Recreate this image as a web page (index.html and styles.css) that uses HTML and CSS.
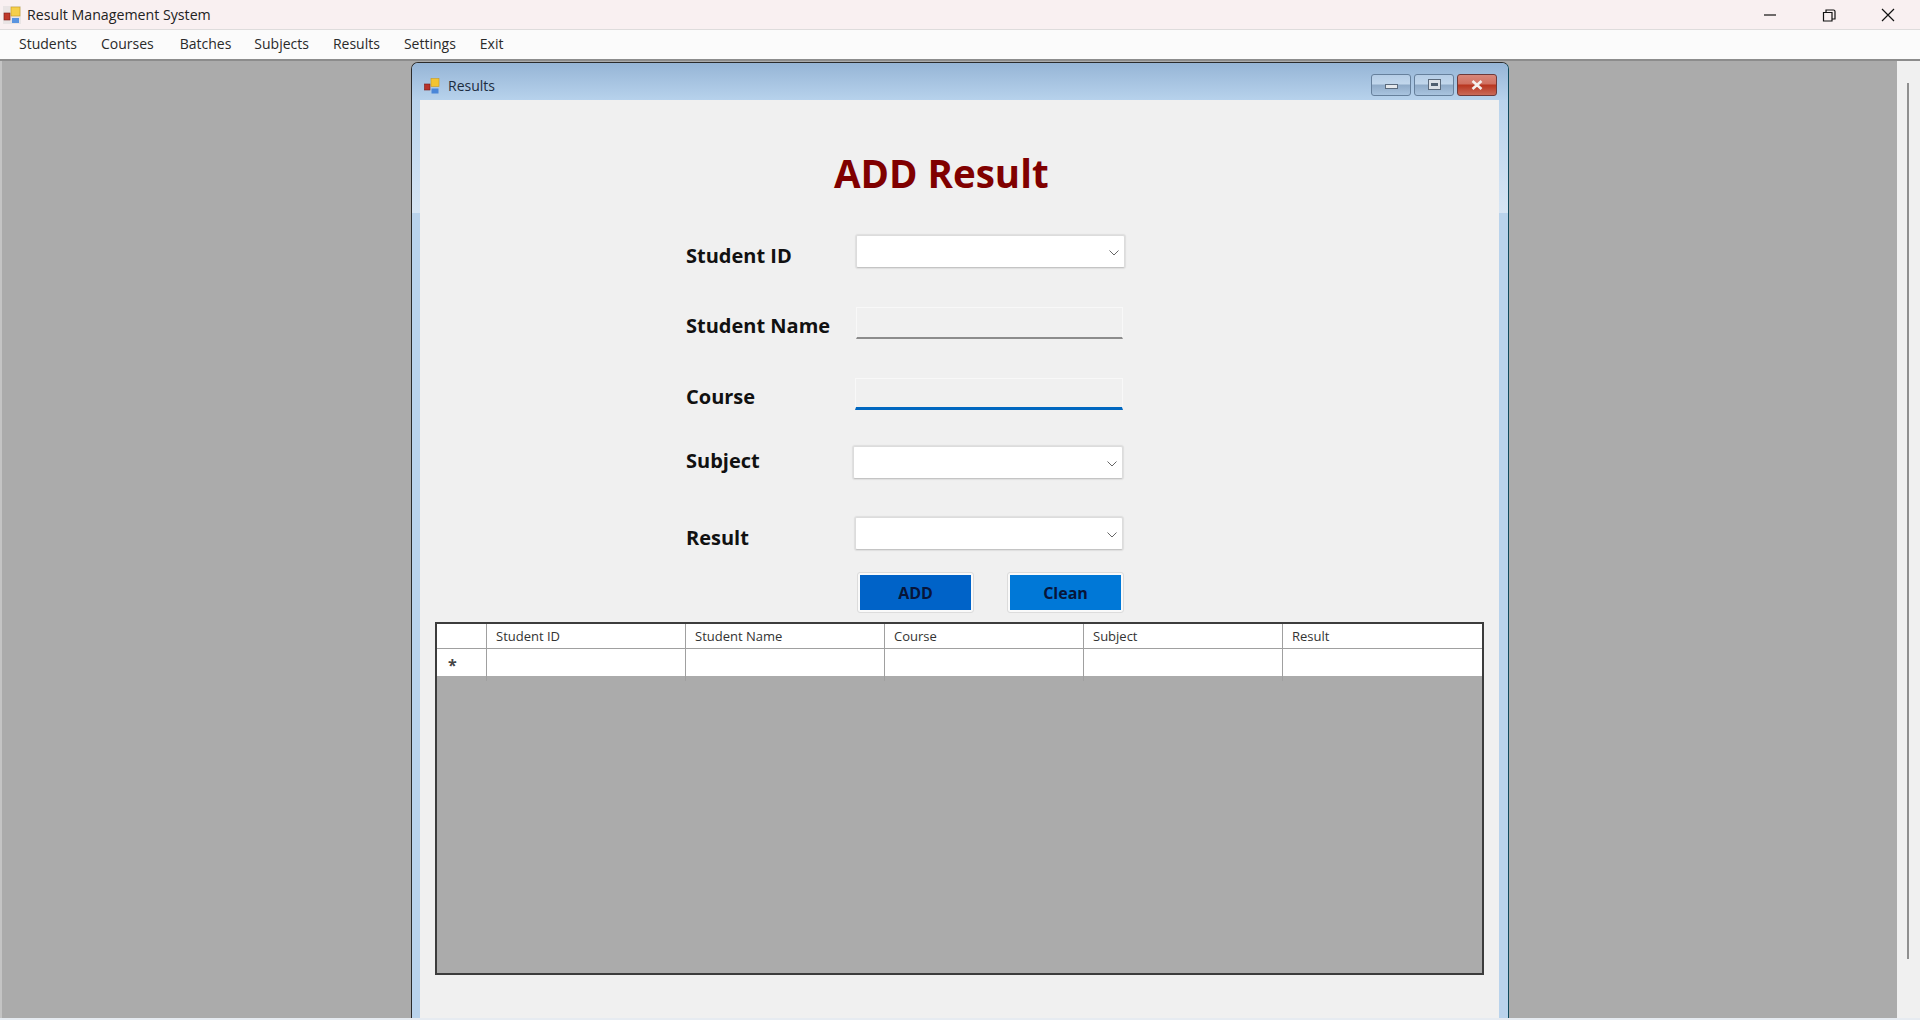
FILE: index.html
```html
<!DOCTYPE html>
<html lang="en">
<head>
  <meta charset="UTF-8">
  <title>Result Management System</title>
  <link rel="stylesheet" href="styles.css">
</head>
<body>
  <header class="titlebar">
    <svg class="app-icon" viewBox="0 0 18 18">
      <rect width="18" height="18" fill="#e9e4e4"/>
      <rect x="1" y="7" width="6" height="7" fill="#c0392b" stroke="#7a1a14" stroke-width="0.6"/>
      <rect x="8" y="1" width="9" height="9" fill="#f6cf4a" stroke="#c89a20" stroke-width="0.6"/>
      <rect x="9" y="12" width="7" height="5" fill="#5a94e0"/>
    </svg>
    <span class="titlebar-text">Result Management System</span>
    <div class="winbtns">
      <svg viewBox="0 0 14 14"><path d="M1 7h12" stroke="#111" stroke-width="1.200" fill="none"/></svg>
      <svg viewBox="0 0 14 14"><path d="M1.500 4.500h8.500v8.500h-8.500z M4 4.500v-2.500h7.500a1.500 1.500 0 0 1 1.500 1.500v7.500h-3" stroke="#111" stroke-width="1.200" fill="none"/></svg>
      <svg viewBox="0 0 14 14"><path d="M1 1l12 12M13 1L1 13" stroke="#111" stroke-width="1.200" fill="none"/></svg>
    </div>
  </header>

  <nav class="menubar">
    <span class="menu-item">Students</span>
    <span class="menu-item">Courses</span>
    <span class="menu-item menu-batches">Batches</span>
    <span class="menu-item">Subjects</span>
    <span class="menu-item">Results</span>
    <span class="menu-item">Settings</span>
    <span class="menu-item">Exit</span>
  </nav>

  <main class="workspace">
    <section class="child-window">
      <div class="child-title">
        <svg class="child-icon" viewBox="0 0 16 16">
          <rect x="0.500" y="6" width="5.500" height="6" fill="#b8322a" stroke="#7a1a14" stroke-width="0.6"/>
          <rect x="7" y="0.500" width="8" height="8" fill="#f4c430" stroke="#c89a20" stroke-width="0.6"/>
          <rect x="7.500" y="10.500" width="7" height="5" fill="#4a86d8"/>
        </svg>
        <span class="child-title-text">Results</span>
        <div class="child-btns">
          <div class="cbtn"><span class="glyph-min"></span></div>
          <div class="cbtn"><span class="glyph-max"></span></div>
          <div class="cbtn cbtn-close">
            <svg viewBox="0 0 14 10"><path d="M2.500 1l9 8M11.500 1l-9 8" stroke="#f4f0ee" stroke-width="2.600" fill="none"/></svg>
          </div>
        </div>
      </div>

      <div class="client">
        <h1 class="form-heading">ADD Result</h1>

        <div class="form-row row-id">
          <label class="form-label label-low">Student ID</label>
          <div class="combo">
            <svg class="chevron" viewBox="0 0 10 6"><path d="M0.500 0.500L5 5l4.500-4.500" stroke="#666" fill="none"/></svg>
          </div>
        </div>

        <div class="form-row row-name">
          <label class="form-label label-mid">Student Name</label>
          <input class="textbox" type="text">
        </div>

        <div class="form-row row-course">
          <label class="form-label label-mid">Course</label>
          <input class="textbox textbox-focus" type="text">
        </div>

        <div class="form-row row-subject">
          <label class="form-label label-high">Subject</label>
          <div class="combo combo-subject">
            <svg class="chevron" viewBox="0 0 10 6"><path d="M0.500 0.500L5 5l4.500-4.500" stroke="#666" fill="none"/></svg>
          </div>
        </div>

        <div class="form-row row-result">
          <label class="form-label label-low">Result</label>
          <div class="combo combo-result">
            <svg class="chevron" viewBox="0 0 10 6"><path d="M0.500 0.500L5 5l4.500-4.500" stroke="#666" fill="none"/></svg>
          </div>
        </div>

        <div class="button-row">
          <button class="btn btn-add">ADD</button>
          <button class="btn btn-clean">Clean</button>
        </div>

        <div class="grid-view">
          <div class="grid-head">
            <div class="grid-corner"></div>
            <div class="grid-col">Student ID</div>
            <div class="grid-col">Student Name</div>
            <div class="grid-col">Course</div>
            <div class="grid-col">Subject</div>
            <div class="grid-col">Result</div>
          </div>
          <div class="grid-new-row">
            <div class="grid-rowhead">*</div>
            <div class="grid-cell"></div>
            <div class="grid-cell"></div>
            <div class="grid-cell"></div>
            <div class="grid-cell"></div>
            <div class="grid-cell"></div>
          </div>
        </div>
      </div>
    </section>

    <aside class="scrollbar">
      <div class="scroll-thumb"></div>
    </aside>
  </main>
  <div class="bottom-strip"></div>
</body>
</html>
```

FILE: styles.css
```css
* {
  box-sizing: border-box;
}

html, body {
  height: 100%;
}

body {
  display: flex;
  flex-direction: column;
  margin: 0;
  overflow: hidden;
  font-family: "Open Sans", "Noto Sans", sans-serif;
  background-color: #ababab;
}

/* Main window caption */
.titlebar {
  display: flex;
  align-items: center;
  height: 30px;
  padding-left: 3px;
  background-color: #f9f0f1;
  border-bottom: 1px solid #dedcdc;
}

.app-icon {
  width: 18px;
  height: 18px;
}

.titlebar-text {
  margin-left: 6px;
  font-size: 14.200px;
  color: #222;
}

.winbtns {
  display: flex;
  gap: 45px;
  margin-left: auto;
  margin-right: 25px;
}

.winbtns svg {
  width: 14px;
  height: 14px;
}

/* Menu */
.menubar {
  display: flex;
  align-items: center;
  height: 31px;
  padding: 0 0 2px 19px;
  gap: 24px;
  background-color: #fbfbfb;
  border-bottom: 2px solid #8c8c8c;
}

.menu-item {
  font-size: 14px;
  color: #2a2a2a;
}

.menu-batches {
  margin: 0 -1px 0 2px;
}

/* MDI area */
.workspace {
  position: relative;
  flex: 1;
  background-color: #ababab;
  border-left: 2px solid #c4c4c4;
}

.scrollbar {
  position: absolute;
  top: 0;
  right: 0;
  bottom: 0;
  width: 23px;
  background-color: #f0f0f0;
}

.scroll-thumb {
  width: 2px;
  height: 876px;
  margin: 22px 0 0 10px;
  background-color: #8f8f8f;
}

.bottom-strip {
  height: 2px;
  background-color: #e6ebf1;
}

/* Child window */
.child-window {
  position: absolute;
  top: 1px;
  left: 409px;
  bottom: 0;
  width: 1098px;
  display: flex;
  flex-direction: column;
  padding: 0 9px 0 8px;
  background: linear-gradient(#b9d3ec 37px, #d6e5f4 150px, #b9d3ec 150px);
  border: 1px solid #2b2b2b;
  border-bottom: 0;
  border-right-color: #0f4a5c;
  border-radius: 7px 7px 0 0;
}

.child-title {
  display: flex;
  align-items: center;
  height: 37px;
  margin: 0 -9px 0 -8px;
  padding: 6px 11px 0 12px;
  border-radius: 6px 6px 0 0;
  background: linear-gradient(#96b5d6, #b7d2ec);
}

.child-icon {
  width: 16px;
  height: 16px;
  margin-top: 2px;
}

.child-title-text {
  margin: 2px 0 0 8px;
  font-size: 14px;
  color: #1c2c40;
}

.child-btns {
  display: flex;
  gap: 3px;
  margin-left: auto;
}

.cbtn {
  display: flex;
  align-items: center;
  justify-content: center;
  width: 40px;
  height: 22px;
  border: 1px solid #66809c;
  border-radius: 3px;
  background: linear-gradient(#b5cde6 0, #c2d7ec 45%, #8fabc8 50%, #a9c4df 100%);
}

.cbtn-close {
  border-color: #6e3a3a;
  background: linear-gradient(#d9877a 0, #d07060 45%, #b8351f 50%, #c96a58 100%);
}

.cbtn-close svg {
  width: 14px;
  height: 10px;
}

.glyph-min {
  width: 13px;
  height: 5px;
  margin-top: 3px;
  border: 1px solid #5a6a7c;
  background-color: #e4e8ec;
}

.glyph-max {
  display: flex;
  align-items: center;
  justify-content: center;
  width: 13px;
  height: 11px;
  border: 1px solid #5a6a7c;
  background-color: #dbe1e8;
}

.glyph-max::after {
  content: "";
  width: 7px;
  height: 3px;
  background-color: #4f5f70;
}

.client {
  flex: 1;
  min-height: 0;
  padding-left: 266px;
  background-color: #f0f0f0;
}

.form-heading {
  margin: 52px 0 0 148px;
  font-size: 38.500px;
  line-height: 43px;
  font-weight: 700;
  color: #800000;
}

/* Form */
.form-row {
  display: flex;
  align-items: center;
}

.row-id {
  margin-top: 40px;
}

.row-name {
  margin-top: 39px;
}

.row-course {
  margin-top: 39px;
}

.row-subject {
  margin-top: 36px;
}

.row-result {
  margin-top: 38px;
}

.form-label {
  width: 170px;
  font-size: 20px;
  line-height: 24px;
  font-weight: 700;
  color: #111;
}

.label-low {
  padding-top: 8px;
}

.label-mid {
  padding-top: 5px;
}

.label-high {
  padding-bottom: 4px;
}

.combo {
  display: flex;
  align-items: center;
  justify-content: flex-end;
  width: 269px;
  height: 33px;
  padding-right: 5px;
  background-color: #fff;
  border: 1px solid #dcdcdc;
  border-bottom-color: #c4c4c4;
  border-radius: 2px;
  box-shadow: 0 0 1px 1px #dedede;
}

.combo-subject {
  width: 270px;
  margin-left: -3px;
}

.combo-result {
  width: 268px;
  margin-left: -1px;
}

.chevron {
  width: 10px;
  height: 6px;
  margin-top: 2px;
}

.textbox {
  display: block;
  width: 267px;
  height: 32px;
  padding: 0;
  background-color: #f0f0f0;
  border: 1px solid #f8f8f8;
  border-bottom: 2px solid #8c8c8c;
  border-radius: 0;
}

.textbox-focus {
  width: 268px;
  margin-left: -1px;
  border-bottom: 3px solid #0067c0;
}

.button-row {
  display: flex;
  gap: 35px;
  margin: 23px 0 0 172px;
}

.btn {
  width: 115px;
  height: 39px;
  padding: 0;
  font-family: inherit;
  font-size: 16px;
  font-weight: 700;
  color: #07153a;
  border: 2px solid #fafafa;
  outline: 1px solid #dcdcdc;
  border-radius: 2px;
}

.btn-add {
  background-color: #0063c8;
}

.btn-clean {
  background-color: #0078d7;
}

/* Data grid */
.grid-view {
  width: 1049px;
  height: 353px;
  margin: 10px 0 0 -251px;
  background-color: #ababab;
  border: 2px solid #3c3c3c;
}

.grid-head,
.grid-new-row {
  display: grid;
  grid-template-columns: 50px repeat(4, 199px) 1fr;
  background-color: #fff;
}

.grid-head {
  height: 25px;
  border-bottom: 1px solid #a0a0a0;
}

.grid-new-row {
  height: 27px;
}

.grid-corner,
.grid-col,
.grid-rowhead,
.grid-cell {
  border-right: 1px solid #a0a0a0;
}

.grid-col {
  padding-left: 9px;
  font-size: 13px;
  line-height: 25px;
  color: #333;
}

.grid-rowhead {
  padding-left: 11px;
  font-size: 16px;
  font-weight: 700;
  line-height: 32px;
  color: #444;
}

.grid-cell:last-child,
.grid-col:last-child {
  border-right: 0;
}
```
